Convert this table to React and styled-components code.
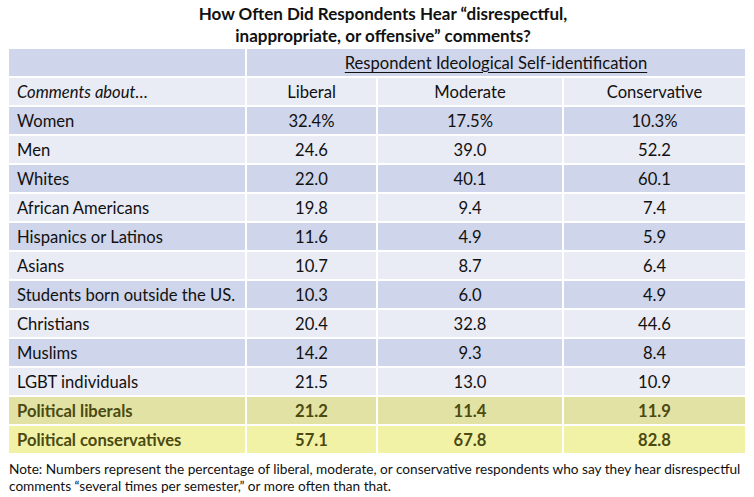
import React from "react";
import styled, { createGlobalStyle } from "styled-components";

const Global = createGlobalStyle`
  html, body { margin: 0; padding: 0; background: #ffffff; }
  body { font-family: Lato, "Open Sans", sans-serif; color: #111; }
`;

const Page = styled.div`
  width: 754px;
  height: 497px;
  display: flex;
  flex-direction: column;
  padding: 3px 9px 0 9px;
  box-sizing: border-box;
`;

const Title = styled.h1`
  margin: 0 0 2px 0;
  padding-left: 12px;
  font-size: 17px;
  line-height: 22px;
  font-weight: 700;
  text-align: center;
  color: #111;
`;

const Table = styled.div`
  display: grid;
  grid-template-columns: 236px 129px 184px 181px;
  grid-auto-rows: 27px;
  gap: 2px;
  background: #ffffff;
  width: 736px;
`;

const bgs = {
  dark: "#cfd5ea",
  light: "#e9ebf5",
  olive: "#e2e2a4",
  yellow: "#f2f2a6",
};

const Cell = styled.div`
  background: ${(p) => bgs[p.$tone]};
  display: flex;
  align-items: center;
  justify-content: ${(p) => (p.$first ? "flex-start" : "center")};
  padding-left: ${(p) => (p.$first ? "8px" : "0")};
  grid-column: ${(p) => (p.$span ? `span ${p.$span}` : "auto")};
  font-size: 16.6px;
  font-weight: ${(p) => (p.$bold ? 700 : 400)};
  font-style: ${(p) => (p.$italic ? "italic" : "normal")};
  color: ${(p) => (p.$bold ? "#4b4a12" : "#111")};
  white-space: nowrap;
`;

const Underlined = styled.span`
  text-decoration: underline;
  text-underline-offset: 3px;
`;

const Note = styled.p`
  margin: 8px 0 0 0;
  font-size: 13.65px;
  line-height: 17px;
  color: #111;
`;

const rows = [
  ["Women", "32.4%", "17.5%", "10.3%"],
  ["Men", "24.6", "39.0", "52.2"],
  ["Whites", "22.0", "40.1", "60.1"],
  ["African Americans", "19.8", "9.4", "7.4"],
  ["Hispanics or Latinos", "11.6", "4.9", "5.9"],
  ["Asians", "10.7", "8.7", "6.4"],
  ["Students born outside the US.", "10.3", "6.0", "4.9"],
  ["Christians", "20.4", "32.8", "44.6"],
  ["Muslims", "14.2", "9.3", "8.4"],
  ["LGBT individuals", "21.5", "13.0", "10.9"],
];

const highlighted = [
  ["Political liberals", "21.2", "11.4", "11.9", "olive"],
  ["Political conservatives", "57.1", "67.8", "82.8", "yellow"],
];

export default function App() {
  return (
    <Page>
      <Global />
      <Title>
        How Often Did Respondents Hear “disrespectful,
        <br />
        inappropriate, or offensive” comments?
      </Title>
      <Table>
        <Cell $tone="dark" $first />
        <Cell $tone="dark" $span={3}>
          <Underlined>Respondent Ideological Self-identification</Underlined>
        </Cell>
        <Cell $tone="light" $first $italic>
          Comments about…
        </Cell>
        <Cell $tone="light">Liberal</Cell>
        <Cell $tone="light">Moderate</Cell>
        <Cell $tone="light">Conservative</Cell>
        {rows.map((r, i) => {
          const tone = i % 2 === 0 ? "dark" : "light";
          return (
            <React.Fragment key={r[0]}>
              <Cell $tone={tone} $first>{r[0]}</Cell>
              <Cell $tone={tone}>{r[1]}</Cell>
              <Cell $tone={tone}>{r[2]}</Cell>
              <Cell $tone={tone}>{r[3]}</Cell>
            </React.Fragment>
          );
        })}
        {highlighted.map((r) => (
          <React.Fragment key={r[0]}>
            <Cell $tone={r[4]} $first $bold>{r[0]}</Cell>
            <Cell $tone={r[4]} $bold>{r[1]}</Cell>
            <Cell $tone={r[4]} $bold>{r[2]}</Cell>
            <Cell $tone={r[4]} $bold>{r[3]}</Cell>
          </React.Fragment>
        ))}
      </Table>
      <Note>
        Note: Numbers represent the percentage of liberal, moderate, or conservative respondents who say they hear disrespectful
        comments “several times per semester,” or more often than that.
      </Note>
    </Page>
  );
}
